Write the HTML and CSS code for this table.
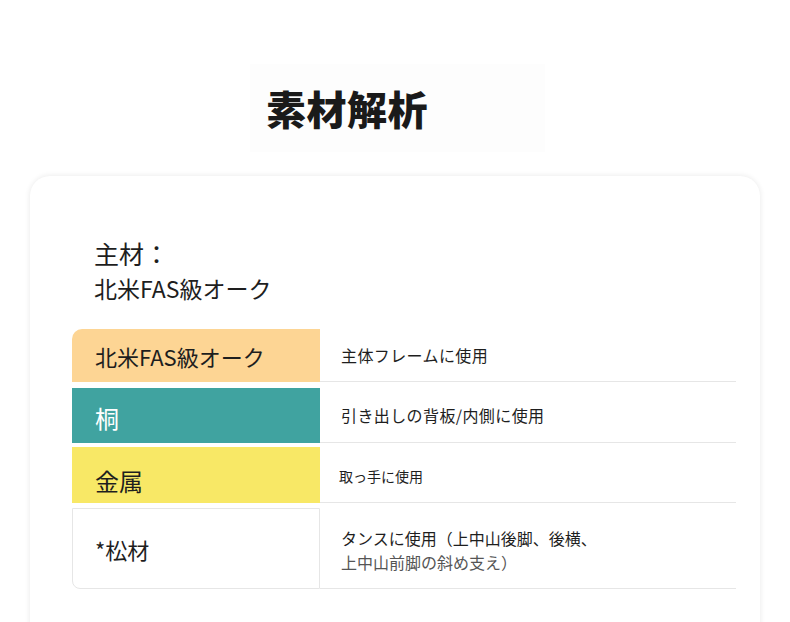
FILE: index.html
```html
<!DOCTYPE html>
<html lang="ja">
<head>
<meta charset="utf-8">
<title>素材解析</title>
<link rel="stylesheet" href="styles.css">
</head>
<body>
<div class="page">
  <div class="title-wrap">
    <h1 class="title">素材解析</h1>
  </div>
  <section class="card">
    <div class="main">
      <div class="main-label">主材：</div>
      <div class="main-value">北米FAS級オーク</div>
    </div>
    <div class="table">
      <div class="row row-1">
        <div class="name name-oak">北米FAS級オーク</div>
        <div class="use">主体フレームに使用</div>
      </div>
      <div class="row row-2">
        <div class="name name-kiri">桐</div>
        <div class="use use-kiri">引き出しの背板/内側に使用</div>
      </div>
      <div class="row row-3">
        <div class="name name-metal">金属</div>
        <div class="use use-small">取っ手に使用</div>
      </div>
      <div class="row row-4">
        <div class="name name-pine">*松材</div>
        <div class="use use-multi">
          <span class="line1">タンスに使用（上中山後脚、後横、</span>
          <span class="line2">上中山前脚の斜め支え）</span>
        </div>
      </div>
    </div>
  </section>
</div>
</body>
</html>
```
FILE: styles.css
```css
html, body {
  margin: 0;
  padding: 0;
  background: #ffffff;
  overflow: hidden;
}
body {
  font-family: "Noto Sans CJK JP", "Noto Sans", sans-serif;
  color: #1e1e1e;
}
.page {
  width: 790px;
  height: 622px;
  overflow: hidden;
}
.title-wrap {
  margin-left: 250px;
  margin-top: 64px;
  width: 295px;
  height: 88px;
  background: #fdfdfd;
  display: flex;
  align-items: center;
}
.title {
  margin: 0 0 0 16px;
  font-size: 40px;
  line-height: 1;
  font-weight: 900;
  color: #1a1a1a;
  letter-spacing: 0.5px;
}
.card {
  margin-left: 30px;
  margin-top: 24px;
  width: 730px;
  height: 520px;
  border-radius: 20px;
  background: #fff;
  box-shadow: 0 0 5px 1px rgba(0, 0, 0, 0.07);
  padding: 60px 24px 0 42px;
  box-sizing: border-box;
}
.main {
  padding-left: 22px;
}
.main-label {
  font-size: 25px;
  line-height: 35px;
}
.main-value {
  font-size: 23px;
  line-height: 34px;
}
.table {
  margin-top: 24px;
  width: 664px;
}
.row {
  display: grid;
  grid-template-columns: 248px 1fr;
}
.name {
  display: flex;
  align-items: center;
  padding-left: 23px;
  font-size: 22px;
  color: #1e1e1e;
}
.use {
  display: flex;
  align-items: center;
  padding-left: 21px;
  font-size: 16px;
  letter-spacing: 0.4px;
  border-bottom: 1px solid #e6e6e6;
  color: #1e1e1e;
}
.use-kiri {
  padding-top: 6px;
}
.use-small {
  font-size: 14px;
  letter-spacing: 0;
  padding-left: 19px;
  padding-top: 6px;
}
.use-multi {
  flex-direction: column;
  align-items: flex-start;
  justify-content: center;
  line-height: 24px;
  letter-spacing: 0;
  padding-top: 8px;
}
.line2 {
  color: #555;
}
.row-1 { height: 53px; }
.row-2 { height: 61px; }
.row-3 { height: 60px; }
.row-4 { height: 86px; }
.name-oak {
  background: #fdd594;
  border-top-left-radius: 10px;
}
.name-kiri {
  background: #40a3a0;
  color: #fff;
  margin-top: 6px;
  font-size: 24px;
  padding-top: 4px;
}
.name-metal {
  background: #f8e866;
  margin-top: 4px;
  font-size: 24px;
  padding-top: 10px;
}
.name-pine {
  margin-top: 5px;
  border: 1px solid #e6e6e6;
  border-bottom-left-radius: 8px;
  padding-left: 22px;
  font-size: 22px;
}
```
